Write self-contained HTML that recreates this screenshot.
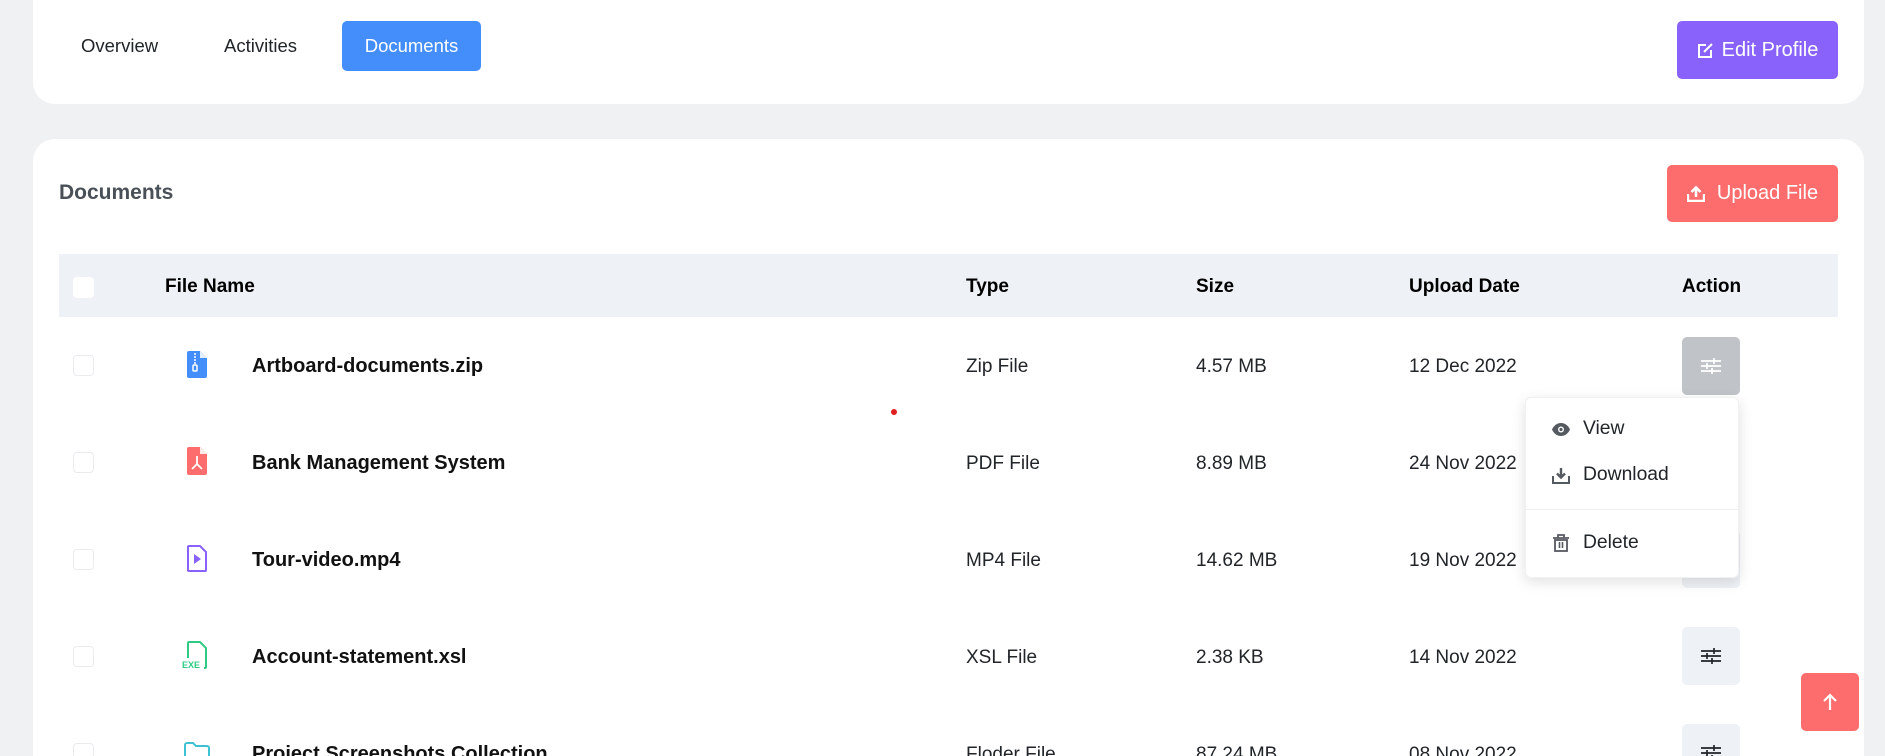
<!DOCTYPE html>
<html style="height:756px;overflow:hidden"><head><meta charset="utf-8"><style>
*{box-sizing:border-box;margin:0;padding:0}
html,body{height:756px;overflow:hidden}
body{width:1885px;background:#f0f1f3;font-family:"Liberation Sans",Arial,sans-serif;color:#212529;position:relative}
.card{position:absolute;background:#fff;border-radius:22px}
.a{position:absolute;white-space:nowrap}
.tab{font-size:18.5px;top:35px}
.btn{position:absolute;border-radius:5px;color:#fff;font-size:20px;display:flex;align-items:center;justify-content:center;gap:10px}
.th{font-size:19px;font-weight:bold;color:#000;top:276px}
.cb{position:absolute;width:21px;height:21px;border:1px solid #e9ebee;border-radius:4px;background:#fff}
.td{font-size:19px;color:#212529}
.fn{font-size:20px;font-weight:bold;color:#111}
.act{position:absolute;left:1682px;width:58px;height:58px;background:#eef1f5;border-radius:5px;display:flex;align-items:center;justify-content:center}
.mi{position:absolute;left:1552px;font-size:19.3px;color:#212529;display:flex;align-items:center;gap:13px}
</style></head><body>
<div class="card" style="left:33px;top:-22px;width:1831px;height:126px"></div>
<div class="a tab" style="left:81px">Overview</div>
<div class="a tab" style="left:224px">Activities</div>
<div class="btn" style="left:342px;top:21px;width:139px;height:50px;background:#448efc;font-size:18.5px">Documents</div>
<div class="btn" style="left:1677px;top:21px;width:161px;height:58px;background:#8862fa;gap:8px">
<svg width="17" height="17" viewBox="0 0 17 17"><path d="M14 8v7H2V3h7" fill="none" stroke="#fff" stroke-width="2"/><path d="M7 10l8-8" stroke="#fff" stroke-width="2"/></svg>Edit Profile</div>

<div class="card" style="left:33px;top:139px;width:1831px;height:617px;border-radius:22px 22px 0 0"></div>
<div class="a" style="left:59px;top:181px;font-size:21px;font-weight:bold;color:#495057">Documents</div>
<div class="btn" style="left:1667px;top:165px;width:171px;height:57px;background:#fe6d6d;gap:12px">
<svg width="18" height="17" viewBox="0 0 18 17"><path d="M1 9v7h16V9" fill="none" stroke="#fff" stroke-width="2.4"/><path d="M9 12V3M4.5 7L9 2.5 13.5 7" fill="none" stroke="#fff" stroke-width="2.6"/></svg>Upload File</div>

<div class="a" style="left:59px;top:254px;width:1779px;height:63px;background:#eef1f5"></div>
<div class="cb" style="left:73px;top:277px;border-color:#fff"></div>
<div class="a th" style="left:165px">File Name</div>
<div class="a th" style="left:966px">Type</div>
<div class="a th" style="left:1196px">Size</div>
<div class="a th" style="left:1409px">Upload Date</div>
<div class="a th" style="left:1682px">Action</div>

<div class="cb" style="left:73px;top:355px"></div>
<svg class="a" style="left:187px;top:351px" width="20" height="27" viewBox="0 0 20 27"><path d="M2 0h11l7 7v18a2 2 0 0 1-2 2H2a2 2 0 0 1-2-2V2a2 2 0 0 1 2-2z" fill="#448efc"/><path d="M13 0v7h7" fill="#fff" opacity=".85"/><path d="M7 3h2M7 6h2M7 9h2M7 12h2" stroke="#fff" stroke-width="1.6"/><rect x="6" y="14" width="4" height="6" rx="1" fill="none" stroke="#fff" stroke-width="1.5"/></svg>
<div class="a fn" style="left:252px;top:355px">Artboard-documents.zip</div>
<div class="a td" style="left:966px;top:356px">Zip File</div>
<div class="a td" style="left:1196px;top:356px">4.57 MB</div>
<div class="a td" style="left:1409px;top:356px">12 Dec 2022</div>
<div class="act" style="top:337px;background:#c0c3c7"><svg width="20" height="18" viewBox="0 0 20 18"><path d="M0 4h20M0 9h20M0 14h20M13 1v6M6 6v6M11 11v6" stroke="#fff" stroke-width="1.7"/></svg></div>

<div class="cb" style="left:73px;top:452px"></div>
<svg class="a" style="left:187px;top:447px" width="20" height="28" viewBox="0 0 20 28"><path d="M2 0h11l7 7v19a2 2 0 0 1-2 2H2a2 2 0 0 1-2-2V2a2 2 0 0 1 2-2z" fill="#fe6d6d"/><path d="M13 0v7h7" fill="#fff" opacity=".85"/><path d="M10 9v8M10 17l-5 5M10 17l5 5" stroke="#fff" stroke-width="1.8" fill="none"/></svg>
<div class="a fn" style="left:252px;top:452px">Bank Management System</div>
<div class="a td" style="left:966px;top:453px">PDF File</div>
<div class="a td" style="left:1196px;top:453px">8.89 MB</div>
<div class="a td" style="left:1409px;top:453px">24 Nov 2022</div>

<div class="cb" style="left:73px;top:549px"></div>
<svg class="a" style="left:187px;top:545px" width="20" height="28" viewBox="0 0 20 28"><path d="M2 1h11l6 6v18a1 1 0 0 1-1 1H2a1 1 0 0 1-1-1V2a1 1 0 0 1 1-1z" fill="none" stroke="#8862fa" stroke-width="2"/><path d="M7 9l7 5-7 5z" fill="#8862fa"/></svg>
<div class="a fn" style="left:252px;top:549px">Tour-video.mp4</div>
<div class="a td" style="left:966px;top:550px">MP4 File</div>
<div class="a td" style="left:1196px;top:550px">14.62 MB</div>
<div class="a td" style="left:1409px;top:550px">19 Nov 2022</div>
<div class="act" style="top:530px"></div>

<div class="cb" style="left:73px;top:646px"></div>
<svg class="a" style="left:182px;top:641px" width="26" height="29" viewBox="0 0 26 29"><path d="M6 17V2a1 1 0 0 1 1-1h11l6 6v19a1 1 0 0 1-1 1h-1" fill="none" stroke="#2fcb84" stroke-width="2"/><text x="0" y="27" font-family="Liberation Sans,sans-serif" font-size="9" font-weight="bold" fill="#2fcb84">EXE</text></svg>
<div class="a fn" style="left:252px;top:646px">Account-statement.xsl</div>
<div class="a td" style="left:966px;top:647px">XSL File</div>
<div class="a td" style="left:1196px;top:647px">2.38 KB</div>
<div class="a td" style="left:1409px;top:647px">14 Nov 2022</div>
<div class="act" style="top:627px"><svg width="20" height="18" viewBox="0 0 20 18"><path d="M0 4h20M0 9h20M0 14h20M13 1v6M6 6v6M11 11v6" stroke="#212529" stroke-width="1.7"/></svg></div>

<div class="cb" style="left:73px;top:743px"></div>
<svg class="a" style="left:184px;top:742px" width="26" height="22" viewBox="0 0 26 22"><path d="M1 3a2 2 0 0 1 2-2h6l3 3h11a2 2 0 0 1 2 2v14H1z" fill="none" stroke="#3ec1d3" stroke-width="2"/></svg>
<div class="a fn" style="left:252px;top:743px">Project Screenshots Collection</div>
<div class="a td" style="left:966px;top:744px">Floder File</div>
<div class="a td" style="left:1196px;top:744px">87.24 MB</div>
<div class="a td" style="left:1409px;top:744px">08 Nov 2022</div>
<div class="act" style="top:724px"><svg width="20" height="18" viewBox="0 0 20 18"><path d="M0 4h20M0 9h20M0 14h20M13 1v6M6 6v6M11 11v6" stroke="#212529" stroke-width="1.7"/></svg></div>

<div class="a" style="left:891px;top:409px;width:6px;height:6px;border-radius:50%;background:#e01f1f"></div>

<div class="a" style="left:1525px;top:397px;width:214px;height:181px;background:#fff;border-radius:6px;box-shadow:0 4px 14px rgba(0,0,0,.12);border:1px solid #f0f1f3"></div>
<div class="mi" style="top:418px"><svg width="18" height="13" viewBox="0 0 18 13"><path d="M0 6.5C2 2 5.5 0 9 0s7 2 9 6.5C16 11 12.5 13 9 13S2 11 0 6.5z" fill="#555a60"/><circle cx="9" cy="6.5" r="3" fill="#fff"/><circle cx="9" cy="6.5" r="1.6" fill="#555a60"/></svg>View</div>
<div class="mi" style="top:464px"><svg width="18" height="17" viewBox="0 0 18 17"><path d="M1 9v7h16V9" fill="none" stroke="#555a60" stroke-width="2"/><path d="M9 1v9M5 6.5L9 10.5 13 6.5" fill="none" stroke="#555a60" stroke-width="2.4"/></svg>Download</div>
<div class="a" style="left:1525px;top:509px;width:214px;height:1px;background:#eceef1"></div>
<div class="mi" style="top:532px"><svg width="18" height="18" viewBox="0 0 18 18"><path d="M1 4h16M6 4V1h6v3" fill="none" stroke="#555a60" stroke-width="1.8"/><rect x="3" y="6" width="12" height="11" fill="none" stroke="#555a60" stroke-width="1.8"/><path d="M7.5 8v6M10.5 8v6" stroke="#555a60" stroke-width="1.6"/></svg>Delete</div>

<div class="btn" style="left:1801px;top:673px;width:58px;height:58px;background:#fe6d6d"><svg width="16" height="18" viewBox="0 0 16 18"><path d="M8 17V2M2 8l6-6 6 6" fill="none" stroke="#fff" stroke-width="2.2"/></svg></div>
</body></html>
